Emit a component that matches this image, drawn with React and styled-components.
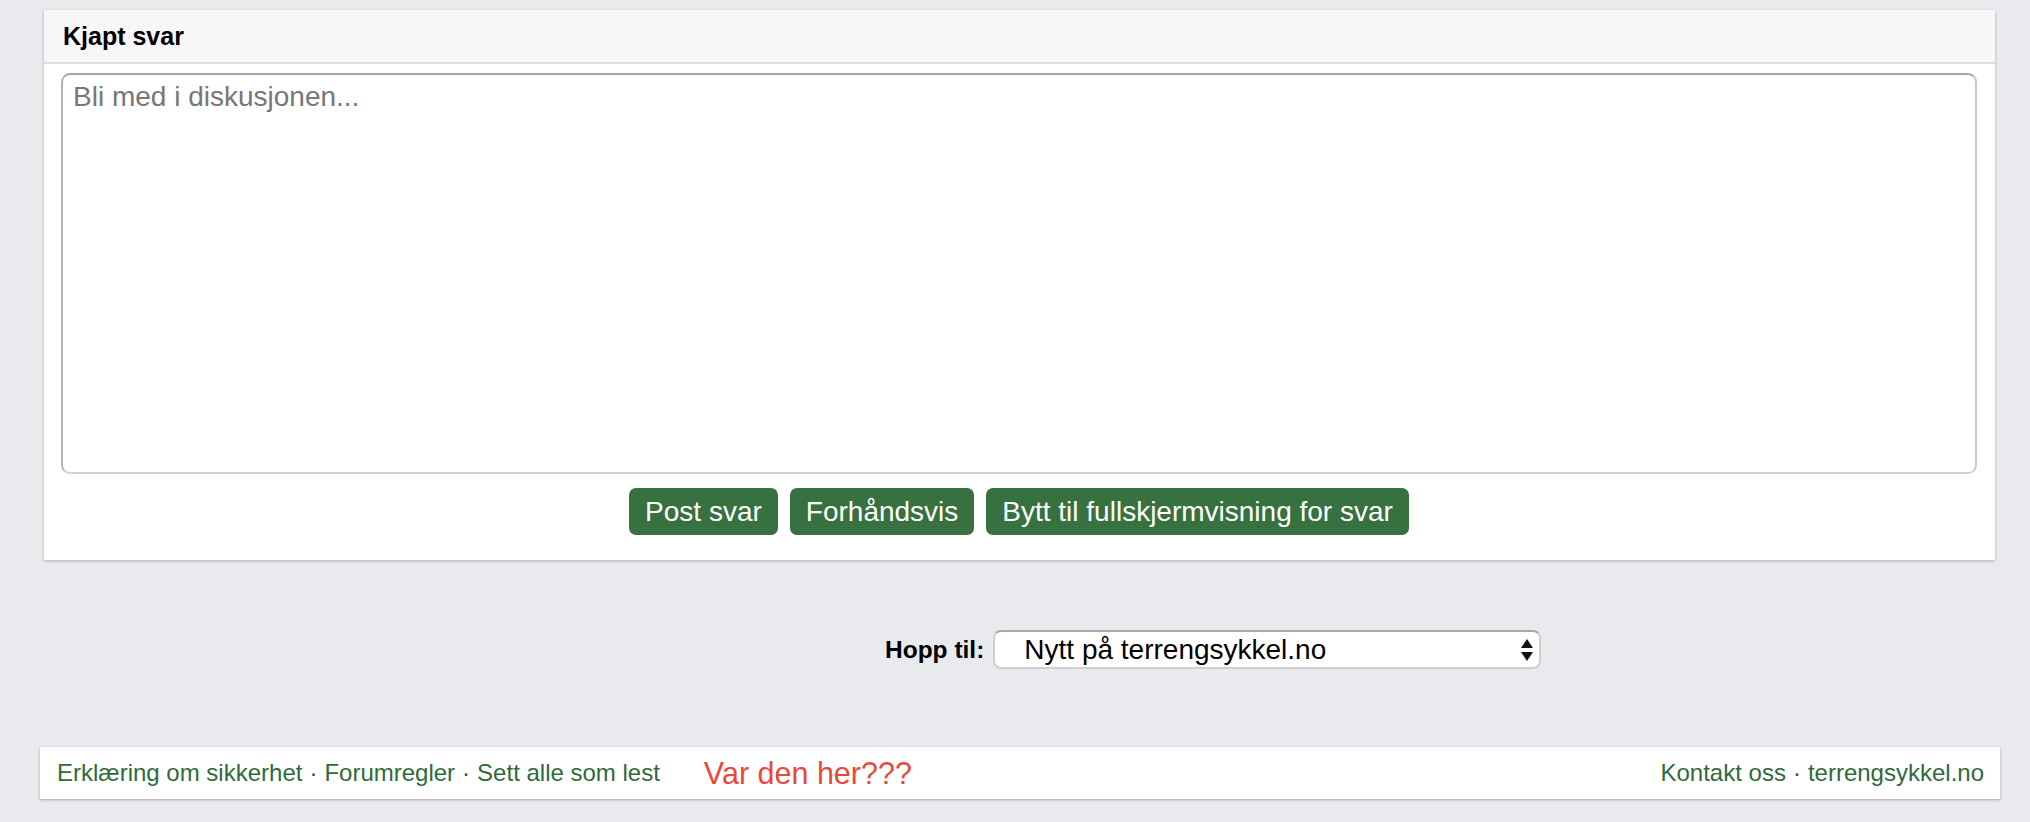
import React from "react";
import styled, { createGlobalStyle } from "styled-components";

const GlobalStyle = createGlobalStyle`
  html, body {
    margin: 0;
    padding: 0;
    background: #e9eaee;
    font-family: "Liberation Sans", Arial, Helvetica, sans-serif;
  }
`;

const Page = styled.div`
  width: 2030px;
  min-height: 822px;
  box-sizing: border-box;
  padding-top: 10px;
`;

const Panel = styled.section`
  margin: 0 35px 0 44px;
  background: #fff;
  box-shadow: 0 1px 3px rgba(0, 0, 0, 0.28);
`;

const PanelHead = styled.h3`
  margin: 0;
  height: 52px;
  display: flex;
  align-items: center;
  padding-left: 19px;
  background: #f7f7f7;
  border-bottom: 2px solid #dedede;
  font-size: 25px;
  font-weight: bold;
  color: #000;
`;

const PanelBody = styled.div`
  padding: 9px 18px 25px 17px;
`;

const Reply = styled.textarea`
  display: block;
  width: 100%;
  height: 401px;
  box-sizing: border-box;
  resize: none;
  padding: 6px 10px;
  border: 2px solid #d2d2d2;
  border-top-color: #a3a3a3;
  border-left-color: #b4b4b4;
  border-right-color: #c8c8c8;
  border-radius: 9px;
  font-family: inherit;
  font-size: 28px;
  color: #222;
  outline: none;
  &::placeholder {
    color: #777;
  }
`;

const Actions = styled.div`
  display: flex;
  justify-content: center;
  gap: 12px;
  margin-top: 14px;
`;

const Button = styled.button`
  height: 47px;
  padding: 0 16px;
  border: none;
  border-radius: 7px;
  background: #36713f;
  color: #fff;
  font-family: inherit;
  font-size: 28px;
  cursor: pointer;
`;

const JumpRow = styled.div`
  display: flex;
  align-items: center;
  margin-top: 70px;
  padding-left: 885px;
  gap: 9px;
`;

const JumpLabel = styled.label`
  font-size: 24.5px;
  font-weight: bold;
  color: #000;
`;

const SelectWrap = styled.div`
  position: relative;
  width: 548px;
  height: 39px;
`;

const Select = styled.select`
  appearance: none;
  width: 100%;
  height: 100%;
  box-sizing: border-box;
  padding: 0 40px 0 29px;
  border: 2px solid #d0d0d0;
  border-top-color: #a8a8a8;
  border-radius: 8px;
  background: #fff;
  font-family: inherit;
  font-size: 28px;
  color: #000;
  outline: none;
`;

const Arrows = styled.svg`
  position: absolute;
  right: 7px;
  top: 8px;
  pointer-events: none;
`;

const Footer = styled.footer`
  display: flex;
  align-items: center;
  justify-content: space-between;
  height: 52px;
  margin: 78px 30px 0 40px;
  padding: 0 16px 0 17px;
  background: #fff;
  box-shadow: 0 1px 3px rgba(0, 0, 0, 0.28);
`;

const LinkGroup = styled.div`
  display: flex;
  align-items: center;
`;

const Link = styled.a`
  color: #2f6b3a;
  font-size: 24px;
  text-decoration: none;
`;

const Dot = styled.span`
  color: #444;
  font-size: 24px;
  padding: 0 7px;
`;

const Notice = styled.span`
  margin-left: 44px;
  color: #e8473b;
  font-size: 30.5px;
`;

const LinkList = ({ items }) => (
  <LinkGroup>
    {items.map((item, i) => (
      <React.Fragment key={item}>
        {i > 0 && <Dot>·</Dot>}
        <Link href="#">{item}</Link>
      </React.Fragment>
    ))}
  </LinkGroup>
);

export default function App() {
  return (
    <Page>
      <GlobalStyle />
      <Panel>
        <PanelHead>Kjapt svar</PanelHead>
        <PanelBody>
          <Reply placeholder="Bli med i diskusjonen..." />
          <Actions>
            <Button>Post svar</Button>
            <Button>Forhåndsvis</Button>
            <Button>Bytt til fullskjermvisning for svar</Button>
          </Actions>
        </PanelBody>
      </Panel>

      <JumpRow>
        <JumpLabel>Hopp til:</JumpLabel>
        <SelectWrap>
          <Select defaultValue="nytt">
            <option value="nytt">Nytt på terrengsykkel.no</option>
          </Select>
          <Arrows width="14" height="24" viewBox="0 0 14 24">
            <path d="M7 1 L13 10 L1 10 Z" fill="#111" />
            <path d="M1 14 L13 14 L7 23 Z" fill="#111" />
          </Arrows>
        </SelectWrap>
      </JumpRow>

      <Footer>
        <LinkGroup>
          <LinkList items={["Erklæring om sikkerhet", "Forumregler", "Sett alle som lest"]} />
          <Notice>Var den her???</Notice>
        </LinkGroup>
        <LinkList items={["Kontakt oss", "terrengsykkel.no"]} />
      </Footer>
    </Page>
  );
}
